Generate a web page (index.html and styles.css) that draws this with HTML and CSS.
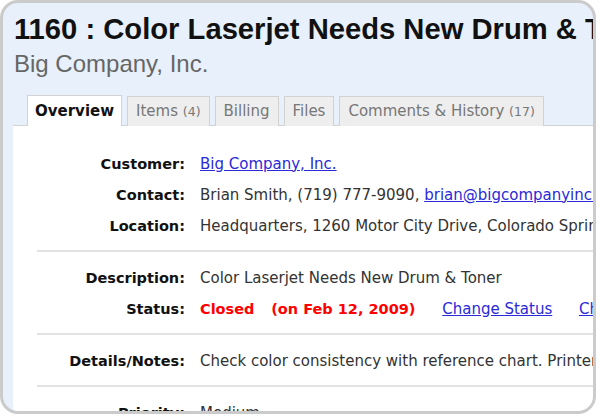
FILE: index.html
```html
<!DOCTYPE html>
<html lang="en">
<head>
    <meta charset="UTF-8">
    <title>1160 : Color Laserjet Needs New Drum &amp; Toner</title>
    <link rel="stylesheet" href="styles.css">
</head>
<body>
    <div class="frame">
        <div class="header">
            <h1>1160 : Color Laserjet Needs New Drum &amp; Toner</h1>
            <div class="company">Big Company, Inc.</div>
        </div>

        <div class="tabs">
            <div class="tab active">Overview</div>
            <div class="tab">Items <span class="count">(4)</span></div>
            <div class="tab">Billing</div>
            <div class="tab">Files</div>
            <div class="tab">Comments &amp; History <span class="count">(17)</span></div>
        </div>

        <div class="panel">
            <div class="group">
                <div class="row">
                    <div class="label">Customer:</div>
                    <div class="value"><a href="#">Big Company, Inc.</a></div>
                </div>
                <div class="row">
                    <div class="label">Contact:</div>
                    <div class="value">Brian Smith, (719) 777-9090, <a href="#">brian@bigcompanyinc.com</a></div>
                </div>
                <div class="row">
                    <div class="label">Location:</div>
                    <div class="value">Headquarters, 1260 Motor City Drive, Colorado Springs, CO</div>
                </div>
            </div>
            <div class="group">
                <div class="row">
                    <div class="label">Description:</div>
                    <div class="value">Color Laserjet Needs New Drum &amp; Toner</div>
                </div>
                <div class="row">
                    <div class="label">Status:</div>
                    <div class="value">
                        <span class="closed">Closed</span>
                        <span class="closed date">(on Feb 12, 2009)</span>
                        <a href="#" class="action">Change Status</a>
                        <a href="#" class="action">Change Owner</a>
                    </div>
                </div>
            </div>
            <div class="group">
                <div class="row">
                    <div class="label">Details/Notes:</div>
                    <div class="value">Check color consistency with reference chart. Printer is on the 2nd floor.</div>
                </div>
            </div>
            <div class="group">
                <div class="row">
                    <div class="label">Priority:</div>
                    <div class="value">Medium</div>
                </div>
            </div>
        </div>
    </div>
</body>
</html>
```

FILE: styles.css
```css
body {
    margin: 0;
    background: #fff;
    font-family: "DejaVu Sans", Verdana, sans-serif;
}
.frame {
    box-sizing: border-box;
    width: 596px;
    height: 414px;
    border: 3px solid #cbcbcb;
    border-radius: 18px;
    background: #e7f0fb;
    padding-left: 10px;
    overflow: hidden;
}
.header {
    padding: 10px 0 0 1px;
    font-family: "Liberation Sans", Arial, sans-serif;
    white-space: nowrap;
}
h1 {
    margin: 0;
    font-size: 29.2px;
    line-height: 33px;
    color: #111;
}
.company {
    margin-top: 4px;
    font-size: 24px;
    line-height: 28px;
    color: #666;
}
.tabs {
    display: flex;
    gap: 5px;
    margin: 17px 0 0 14px;
    position: relative;
    top: 1px;
}
.tab {
    padding: 5px 8px 5px;
    font-size: 15px;
    line-height: 18px;
    color: #777;
    background: #eee;
    border: 1px solid #d2d2d2;
    border-bottom: none;
    white-space: nowrap;
}
.tab.active {
    background: #fff;
    color: #111;
    font-weight: bold;
    padding: 6px 7px 5px;
    margin-top: -1px;
}
.count {
    font-size: 12.5px;
}
.panel {
    background: #fff;
    border-top: 1px solid #d2d2d2;
    padding: 22px 0 0 24px;
    height: 400px;
    white-space: nowrap;
    font-size: 15px;
}
.group {
    border-bottom: 2px solid #e2e2e2;
    padding: 0 0 9px;
    margin-bottom: 10px;
}
.row {
    display: flex;
    gap: 15px;
    height: 31px;
    align-items: center;
}
.label {
    width: 148px;
    flex: none;
    text-align: right;
    font-weight: bold;
    font-size: 14.5px;
    color: #111;
}
.value {
    color: #333;
}
a {
    color: #2a2ad8;
}
.closed {
    color: #ff0000;
    font-weight: bold;
    font-size: 14.5px;
}
.date {
    margin-left: 12px;
}
.action {
    margin-left: 22px;
}
```
